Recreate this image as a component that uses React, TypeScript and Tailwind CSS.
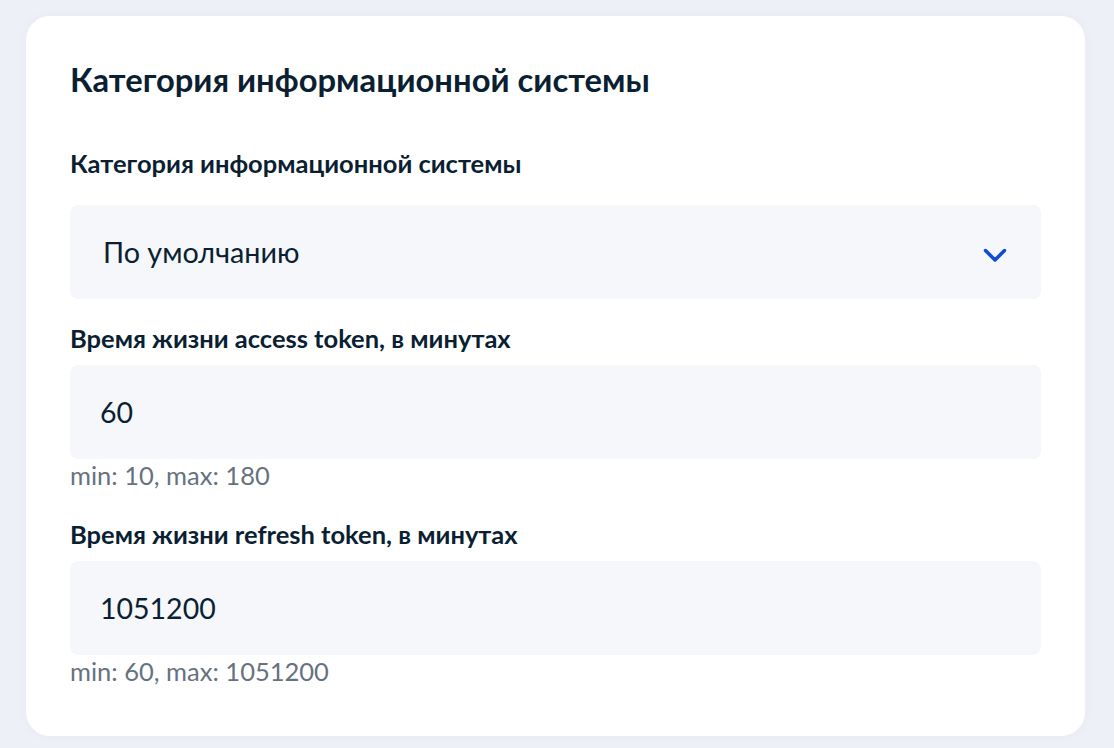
const fieldBox = 'h-[94px] w-full rounded-[8px] bg-[#f5f7fa] flex items-center'

function Chevron() {
  return (
    <svg width="24" height="14" viewBox="0 0 24 14" fill="none" className="shrink-0 mt-[6px]">
      <path d="M2.5 2.5l9.5 9.5 9.5-9.5" stroke="#0d4cd3" strokeWidth="3.5" strokeLinecap="round" strokeLinejoin="round" />
    </svg>
  )
}

function NumberField({ label, value, hint }: { label: string; value: string; hint: string }) {
  return (
    <div className="mt-[23px] [&+&]:mt-[27px]">
      <div className="text-[25.5px] leading-[32px] font-bold text-[#0b1f33]">{label}</div>
      <div className={`${fieldBox} mt-[11px] px-[30px]`}>
        <span className="text-[28.5px] leading-[36px] text-[#0b1f33]">{value}</span>
      </div>
      <div className="text-[25.5px] leading-[32px] text-[#66727f]">{hint}</div>
    </div>
  )
}

export default function App() {
  return (
    <div className="min-h-screen bg-[#edf1f7] px-[26px] pt-[16px] font-['Lato',sans-serif]">
      <div className="w-[1059px] rounded-[24px] bg-white px-[44px] pt-[44px] pb-[49px] shadow-[0_0_12px_rgba(0,0,0,0.03)]">
        <h2 className="text-[32.75px] leading-[40px] font-bold text-[#0b1f33]">
          Категория информационной системы
        </h2>

        <div className="mt-[47px]">
          <div className="text-[25.5px] leading-[32px] font-bold text-[#0b1f33]">
            Категория информационной системы
          </div>
          <div className={`${fieldBox} mt-[26px] pl-[33px] pr-[34px] justify-between`}>
            <span className="text-[28.75px] leading-[36px] text-[#0b1f33]">По умолчанию</span>
            <Chevron />
          </div>
        </div>

        <NumberField label="Время жизни access token, в минутах" value="60" hint="min: 10, max: 180" />
        <NumberField label="Время жизни refresh token, в минутах" value="1051200" hint="min: 60, max: 1051200" />
      </div>
    </div>
  )
}
